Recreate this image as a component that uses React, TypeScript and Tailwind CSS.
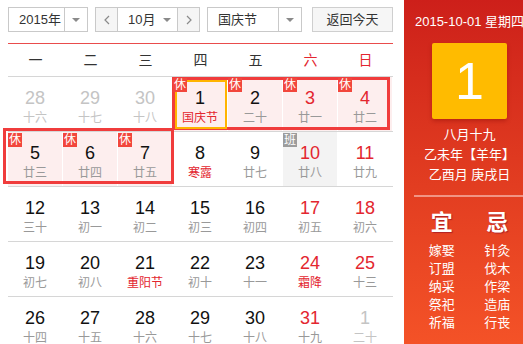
import React from 'react';

type Day = {
  n: number;
  lunar: string;
  other?: boolean;
  red?: boolean;
  festival?: boolean;
  rest?: boolean;
  work?: boolean;
  today?: boolean;
};

const weeks: Day[][] = [
  [
    { n: 28, lunar: '十六', other: true },
    { n: 29, lunar: '十七', other: true },
    { n: 30, lunar: '十八', other: true },
    { n: 1, lunar: '国庆节', festival: true, rest: true, today: true },
    { n: 2, lunar: '二十', rest: true },
    { n: 3, lunar: '廿一', red: true, rest: true },
    { n: 4, lunar: '廿二', red: true, rest: true },
  ],
  [
    { n: 5, lunar: '廿三', rest: true },
    { n: 6, lunar: '廿四', rest: true },
    { n: 7, lunar: '廿五', rest: true },
    { n: 8, lunar: '寒露', festival: true },
    { n: 9, lunar: '廿七' },
    { n: 10, lunar: '廿八', red: true, work: true },
    { n: 11, lunar: '廿九', red: true },
  ],
  [
    { n: 12, lunar: '三十' },
    { n: 13, lunar: '初一' },
    { n: 14, lunar: '初二' },
    { n: 15, lunar: '初三' },
    { n: 16, lunar: '初四' },
    { n: 17, lunar: '初五', red: true },
    { n: 18, lunar: '初六', red: true },
  ],
  [
    { n: 19, lunar: '初七' },
    { n: 20, lunar: '初八' },
    { n: 21, lunar: '重阳节', festival: true },
    { n: 22, lunar: '初十' },
    { n: 23, lunar: '十一' },
    { n: 24, lunar: '霜降', red: true, festival: true },
    { n: 25, lunar: '十三', red: true },
  ],
  [
    { n: 26, lunar: '十四' },
    { n: 27, lunar: '十五' },
    { n: 28, lunar: '十六' },
    { n: 29, lunar: '十七' },
    { n: 30, lunar: '十八' },
    { n: 31, lunar: '十九', red: true },
    { n: 1, lunar: '二十', other: true },
  ],
];

const weekdays = ['一', '二', '三', '四', '五', '六', '日'];
const yi = ['嫁娶', '订盟', '纳采', '祭祀', '祈福'];
const ji = ['针灸', '伐木', '作梁', '造庙', '行丧'];

const Caret = () => (
  <span className="w-0 h-0 border-x-[4px] border-x-transparent border-t-[4px] border-t-[#8a8a8a]" />
);

const Chevron = ({ dir }: { dir: 'left' | 'right' }) => (
  <svg width="6" height="10" viewBox="0 0 6 10">
    <polyline
      points={dir === 'left' ? '5,1 1,5 5,9' : '1,1 5,5 1,9'}
      fill="none"
      stroke="#8a8a8a"
      strokeWidth="1.2"
    />
  </svg>
);

const Cell = ({ d }: { d: Day }) => {
  let numColor = 'text-[#111]';
  if (d.other) numColor = 'text-[#c4c4c4]';
  else if (d.red) numColor = 'text-[#e3262f]';

  let lunarColor = 'text-[#999]';
  if (d.other) lunarColor = 'text-[#c4c4c4]';
  else if (d.festival) lunarColor = 'text-[#e3262f]';

  let bg = '';
  if (d.rest) bg = 'bg-[#fdeeee]';
  else if (d.work) bg = 'bg-[#f3f3f3]';

  return (
    <div className="relative w-[55px] h-full">
      <div className={`h-full w-[54px] flex flex-col items-center pt-[11px] ${bg}`}>
        <div className={`text-[18px] leading-[20px] ${numColor}`}>{d.n}</div>
        <div className={`mt-[2px] text-[12px] leading-[16px] ${lunarColor}`}>{d.lunar}</div>
      </div>
      {d.rest && (
        <div className="absolute left-0 top-[1px] z-20 w-[14px] h-[14px] bg-[#f2463c] text-white text-[12px] leading-[14px] text-center">
          休
        </div>
      )}
      {d.work && (
        <div className="absolute left-0 top-[1px] z-20 w-[14px] h-[14px] bg-[#9c9c9c] text-white text-[12px] leading-[14px] text-center">
          班
        </div>
      )}
    </div>
  );
};

export default function App() {
  return (
    <div
      className="w-[523px] h-[344px] overflow-hidden bg-white"
      style={{ fontFamily: '"Liberation Sans", "Noto Sans CJK SC", sans-serif' }}
    >
      <div className="flex w-[535px] h-full">
        {/* calendar */}
        <div className="w-[404px] shrink-0 pl-[8px] pt-[7px]">
          <div className="flex items-center h-[25px] text-[13px] text-[#333]">
            <div className="flex h-full w-[80px] border border-[#c9c9c9]">
              <div className="w-[55px] flex items-center pl-[10px]">2015年</div>
              <div className="flex-1 flex items-center justify-center border-l border-[#c9c9c9]">
                <Caret />
              </div>
            </div>
            <div className="flex h-full w-[105px] ml-[7px] border border-[#c9c9c9]">
              <div className="w-[22px] flex items-center justify-center bg-[#f5f5f5] border-r border-[#c9c9c9]">
                <Chevron dir="left" />
              </div>
              <div className="w-[59px] flex items-center pl-[10px] gap-[8px]">
                <span>10月</span>
                <Caret />
              </div>
              <div className="flex-1 flex items-center justify-center bg-[#f5f5f5] border-l border-[#c9c9c9]">
                <Chevron dir="right" />
              </div>
            </div>
            <div className="flex h-full w-[95px] ml-[7px] border border-[#c9c9c9]">
              <div className="w-[70px] flex items-center pl-[10px]">国庆节</div>
              <div className="flex-1 flex items-center justify-center border-l border-[#c9c9c9]">
                <Caret />
              </div>
            </div>
            <div className="h-full w-[81px] ml-[10px] flex items-center justify-center bg-[#f6f6f6] border border-[#cfcfcf]">
              返回今天
            </div>
          </div>

          <div className="mt-[11px] w-[385px] h-[34px] flex border-t border-t-[#e94c4c] border-b border-b-[#d6d6d6]">
            {weekdays.map((w, i) => (
              <div
                key={w}
                className={`w-[55px] flex items-center justify-center text-[14px] ${
                  i >= 5 ? 'text-[#e3262f]' : 'text-[#333]'
                }`}
              >
                {w}
              </div>
            ))}
          </div>

          <div className="relative w-[385px]">
            {weeks.map((week, wi) => (
              <div key={wi} className="flex h-[55px] border-b border-[#d6d6d6]">
                {week.map((d, di) => (
                  <Cell key={di} d={d} />
                ))}
              </div>
            ))}
            {/* holiday frames */}
            <div className="absolute z-10 left-[164px] top-0 w-[218px] h-[53px] border-[3px] border-[#f03c3c]" />
            <div className="absolute z-10 left-[-5px] top-[51px] w-[171px] h-[56px] border-[3px] border-[#f03c3c]" />
            <div className="absolute z-10 left-[167px] top-[3px] w-[52px] h-[49px] border-2 border-[#ffb400]" />
          </div>
        </div>

        {/* side panel */}
        <div className="w-[131px] shrink-0 h-full bg-linear-to-b from-[#cd1f1a] to-[#f45227] text-white">
          <div className="pt-[13px] text-[13px] leading-[17px] text-center whitespace-nowrap">
            2015-10-01 星期四
          </div>
          <div className="mt-[13px] mx-auto w-[75px] h-[76px] rounded-[2px] bg-[#ffbb00] shadow-[0_2px_4px_rgba(120,0,0,0.35)] flex items-center justify-center text-[52px] leading-none">
            1
          </div>
          <div className="mt-[6px] text-[13px] leading-[20px] text-center">
            <div>八月十九</div>
            <div>乙未年【羊年】</div>
            <div>乙酉月 庚戌日</div>
          </div>
          <div className="mt-[10px] mx-[10px] h-[2px] bg-[#f19484]" />
          <div className="mt-[13px] px-[10px] grid grid-cols-2 text-center">
            <div className="text-[22px] leading-[26px] font-bold [text-shadow:1px_1px_1px_rgba(120,0,40,0.5)]">宜</div>
            <div className="text-[22px] leading-[26px] font-bold [text-shadow:1px_1px_1px_rgba(120,0,40,0.5)]">忌</div>
            <div className="mt-[6px] text-[13px] leading-[18px]">
              {yi.map((t) => (
                <div key={t}>{t}</div>
              ))}
            </div>
            <div className="mt-[6px] text-[13px] leading-[18px]">
              {ji.map((t) => (
                <div key={t}>{t}</div>
              ))}
            </div>
          </div>
        </div>
      </div>
    </div>
  );
}
